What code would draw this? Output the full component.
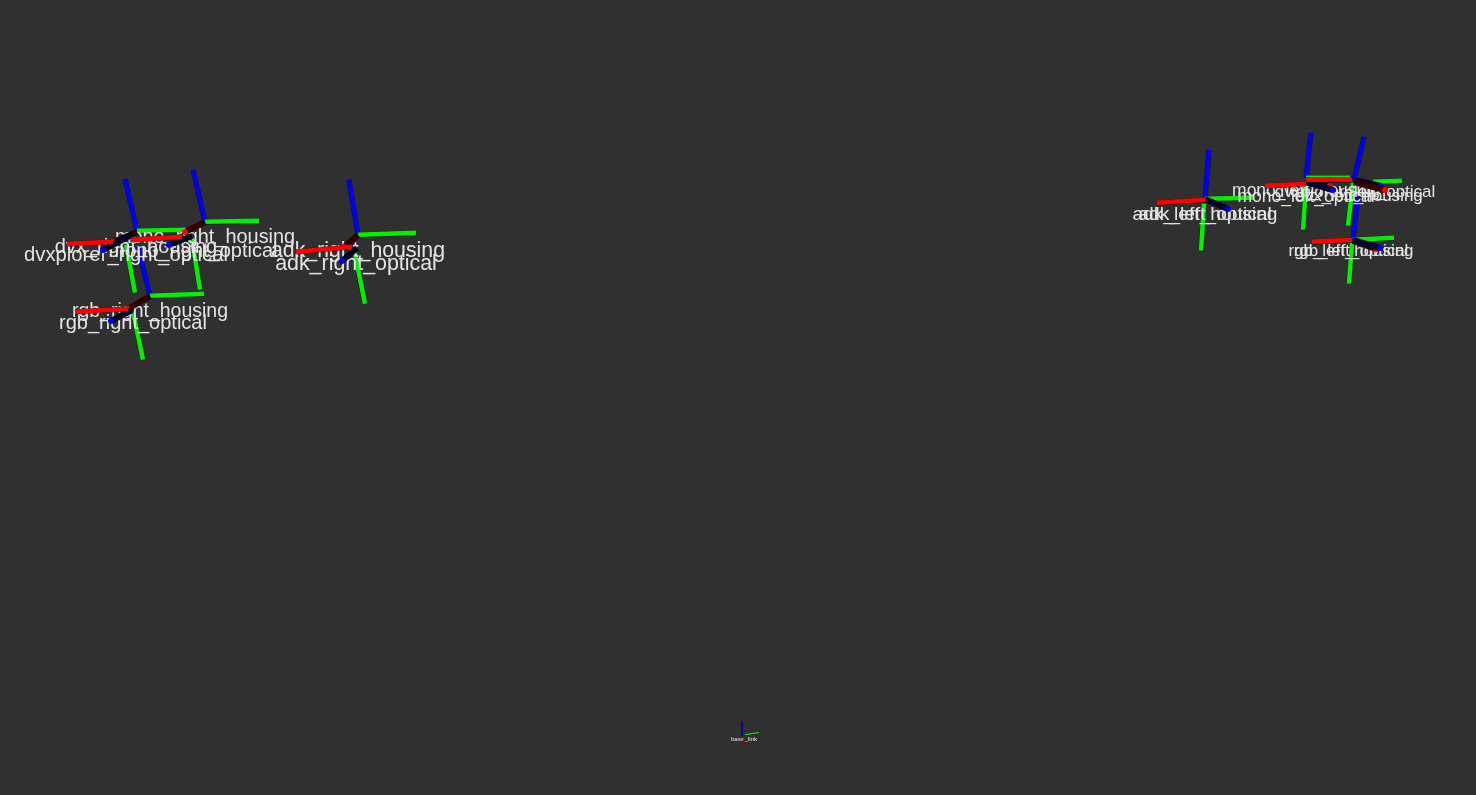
const RED = "#ff0000";
const GREEN = "#00f000";
const BLUE = "#0000f0";

type L = [number, number, number, number];
type Frame = {
  blue: L;
  green: L[];
  red: L[];
  stubs: { line: L; dot: string; dark: string }[];
};

const frames: Frame[] = [
  {
    blue: [137, 231, 125, 179],
    green: [[137, 231, 186, 230], [126, 245, 135, 293]],
    red: [[67, 244, 113, 242]],
    stubs: [
      { line: [137, 232, 113, 242], dot: RED, dark: "#300000" },
      { line: [133, 234, 103, 250], dot: BLUE, dark: "#000020" },
    ],
  },
  {
    blue: [205, 222, 193, 170],
    green: [[205, 222, 259, 221], [192, 240, 200, 290]],
    red: [[131, 240, 182, 237]],
    stubs: [
      { line: [205, 222, 185, 232], dot: RED, dark: "#300000" },
      { line: [192, 236, 169, 245], dot: BLUE, dark: "#000020" },
    ],
  },
  {
    blue: [150, 296, 138, 247],
    green: [[150, 296, 204, 294], [133, 312, 143, 360]],
    red: [[75, 312, 128, 309]],
    stubs: [
      { line: [150, 296, 128, 309], dot: RED, dark: "#300000" },
      { line: [132, 310, 111, 321], dot: BLUE, dark: "#000020" },
    ],
  },
  {
    blue: [358, 235, 349, 180],
    green: [[358, 235, 416, 233], [355, 254, 365, 304]],
    red: [[296, 252, 352, 247]],
    stubs: [
      { line: [358, 235, 344, 247], dot: RED, dark: "#300000" },
      { line: [357, 248, 342, 261], dot: BLUE, dark: "#000020" },
    ],
  },
  {
    blue: [1205, 199, 1209, 150],
    green: [[1205, 199, 1253, 198], [1204, 204, 1201, 251]],
    red: [[1157, 203, 1205, 200]],
    stubs: [{ line: [1205, 199, 1228, 209], dot: BLUE, dark: "#000030" }],
  },
  {
    blue: [1306, 178, 1311, 133],
    green: [[1306, 178, 1350, 178], [1306, 186, 1303, 230]],
    red: [[1265, 186, 1306, 184]],
    stubs: [
      { line: [1306, 180, 1330, 186], dot: RED, dark: "#300000" },
      { line: [1306, 182, 1333, 190], dot: BLUE, dark: "#000030" },
    ],
  },
  {
    blue: [1354, 180, 1364, 137],
    green: [[1373, 182, 1402, 181], [1353, 183, 1348, 226]],
    red: [[1306, 180, 1352, 180]],
    stubs: [
      { line: [1354, 180, 1381, 186], dot: BLUE, dark: "#000030" },
      { line: [1354, 182, 1385, 190], dot: RED, dark: "#300000" },
    ],
  },
  {
    blue: [1353, 240, 1358, 197],
    green: [[1353, 240, 1394, 238], [1352, 243, 1349, 284]],
    red: [[1312, 242, 1352, 240]],
    stubs: [
      { line: [1353, 241, 1376, 249], dot: RED, dark: "#300000" },
      { line: [1353, 240, 1380, 248], dot: BLUE, dark: "#000030" },
    ],
  },
];

const labels: { t: string; x: number; y: number; s: number }[] = [
  { t: "dvx_right_housing", x: 136, y: 246, s: 20 },
  { t: "dvxplorer_right_optical", x: 126, y: 254, s: 20.3 },
  { t: "mono_right_housing", x: 205, y: 237, s: 19.9 },
  { t: "mono_right_optical", x: 193, y: 250, s: 20 },
  { t: "rgb_right_housing", x: 150, y: 311, s: 19.5 },
  { t: "rgb_right_optical", x: 133, y: 322, s: 20 },
  { t: "adk_right_housing", x: 358, y: 251, s: 21.3 },
  { t: "adk_right_optical", x: 356, y: 264, s: 21.4 },
  { t: "adk_left_housing", x: 1205, y: 214, s: 19.2 },
  { t: "adk_left_optical", x: 1205, y: 214, s: 19.2 },
  { t: "mono_left_housing", x: 1306, y: 191, s: 17.5 },
  { t: "mono_left_optical", x: 1306, y: 197, s: 17.5 },
  { t: "dvx_left_housing", x: 1359, y: 195, s: 17 },
  { t: "dvxplorer_left_optical", x: 1355, y: 191, s: 17 },
  { t: "rgb_left_housing", x: 1351, y: 251, s: 16.9 },
  { t: "rgb_left_optical", x: 1351, y: 251, s: 16.9 },
  { t: "base_link", x: 744, y: 739, s: 6.2 },
];

function Seg({ l, c, w = 5.4 }: { l: L; c: string; w?: number }) {
  return (
    <g>
      <line x1={l[0]} y1={l[1]} x2={l[2]} y2={l[3]} stroke="#000000" strokeOpacity={0.5} strokeWidth={w} />
      <line x1={l[0]} y1={l[1] - 0.3} x2={l[2]} y2={l[3] - 0.3} stroke={c} strokeWidth={w - 0.9} />
    </g>
  );
}

export default function App() {
  return (
    <div className="relative h-[795px] w-full overflow-hidden bg-[#303030] font-['Liberation_Sans',Arial,sans-serif]">
      <svg className="absolute inset-0" width="1476" height="795">
        {frames.map((f, i) => (
          <g key={i}>
            <Seg l={f.blue} c={BLUE} />
            {f.green.map((g, j) => (
              <Seg key={j} l={g} c={GREEN} />
            ))}
          </g>
        ))}
        <Seg l={[742, 736, 742, 721]} c={BLUE} w={2.2} />
        <Seg l={[745, 735, 759, 733]} c={GREEN} w={2.2} />
      </svg>
      {labels.map((l) => (
        <div
          key={l.t}
          className="absolute -translate-x-1/2 -translate-y-1/2 whitespace-nowrap leading-none text-[#e4e4e4] blur-[0.4px]"
          style={{ left: l.x, top: l.y, fontSize: l.s }}
        >
          {l.t}
        </div>
      ))}
      <svg className="absolute inset-0" width="1476" height="795">
        {frames.map((f, i) => (
          <g key={i}>
            {f.stubs.map((s, j) => (
              <g key={j}>
                <line
                  x1={s.line[0]}
                  y1={s.line[1]}
                  x2={s.line[2]}
                  y2={s.line[3]}
                  stroke={s.dark}
                  strokeWidth={6}
                />
                <circle cx={s.line[2]} cy={s.line[3]} r={3} fill={s.dot} />
              </g>
            ))}
            {f.red.map((r, j) => (
              <Seg key={j} l={r} c={RED} />
            ))}
          </g>
        ))}
        <Seg l={[744, 739, 744, 746]} c="#c00000" w={2.2} />
      </svg>
    </div>
  );
}
